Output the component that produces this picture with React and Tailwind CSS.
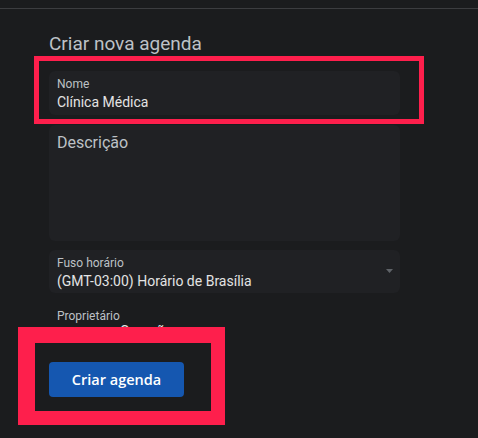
import React from 'react';

const RED = 'border-[#fe1f4c]';

export default function App() {
  return (
    <div className="w-[478px] h-[438px] overflow-hidden bg-[#1b1c1e] relative" style={{ fontFamily: 'Roboto, "Liberation Sans", sans-serif' }}>
      <div className="h-2" />
      <div className="border-t border-[#3c3d40]" />

      <div className="ml-[49px] w-[351px]">
        <h2 className="mt-[23px] text-[19px] leading-6 text-[#bdc1c6] font-normal">
          Criar nova agenda
        </h2>

        {/* Nome */}
        <div className="relative mt-[15px]">
          <div className="h-[44px] rounded-md bg-[#202124] px-2 pt-[6px]">
            <div className="text-xs leading-[14px] text-[#bdc1c6]">Nome</div>
            <div className="mt-[2px] text-sm leading-[18px] text-[#e3e3e3]">Clínica Médica</div>
          </div>
          <div className={`absolute -left-[15px] -right-[24px] -top-[15px] -bottom-[9px] border-[5px] ${RED} pointer-events-none`} />
        </div>

        {/* Descrição */}
        <div className="mt-[10px] h-[116px] rounded-md bg-[#202124] px-2 pt-[6px]">
          <div className="text-base leading-6 text-[#bdc1c6]">Descrição</div>
        </div>

        {/* Fuso horário */}
        <div className="mt-[9px] h-[43px] rounded-md bg-[#202124] px-2 pt-[6px] flex items-start justify-between">
          <div>
            <div className="text-xs leading-[14px] text-[#bdc1c6]">Fuso horário</div>
            <div className="mt-[2px] text-sm leading-[18px] text-[#e3e3e3]">(GMT-03:00) Horário de Brasília</div>
          </div>
          <svg width="7" height="4" viewBox="0 0 7 4" className="mt-[13px] mr-[-0.5px]">
            <path d="M0 0h7L3.5 4z" fill="#5f6368" />
          </svg>
        </div>

        {/* Proprietário */}
        <div className="px-2 pt-[16px]">
          <div className="text-xs leading-[14px] text-[#bdc1c6]">Proprietário</div>
          <div className="-mt-[1px] pl-[63px] text-sm leading-[18px] text-[#e3e3e3]">Gusmão</div>
        </div>
      </div>

      {/* Botão com anotação */}
      <div className="absolute left-[18px] top-[327px] w-[207px] h-[98px] bg-[#fe1f4c] p-[16px_14px_14px_17px]">
        <div className="h-full bg-[#1b1c1e] flex items-start pl-[14px] pt-[19px]">
          <button className="w-[135px] h-[35px] rounded bg-[#1557b0] text-white text-[14.5px] font-semibold" style={{ fontFamily: '"Open Sans", Roboto, sans-serif' }}>
            Criar agenda
          </button>
        </div>
      </div>
    </div>
  );
}
